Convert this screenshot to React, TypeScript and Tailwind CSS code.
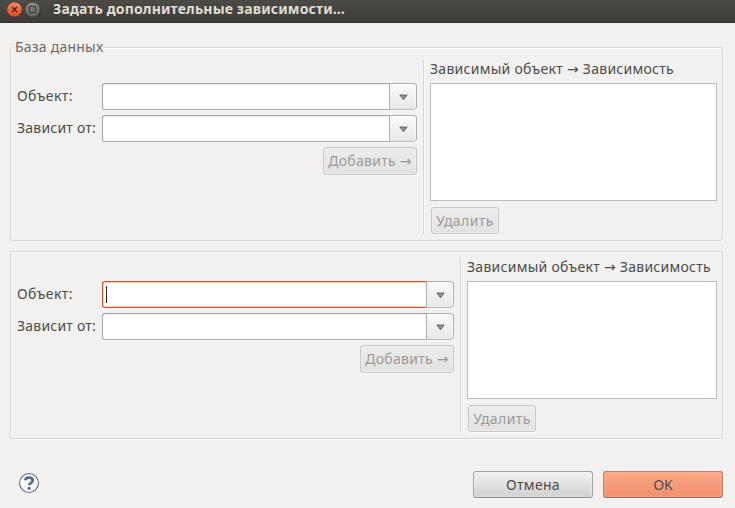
import type { ReactNode } from 'react';

function ComboBox({ focused = false }: { focused?: boolean }) {
  return (
    <div className="flex h-[27px] min-w-0 flex-1 rounded-[4px] shadow-[0_1px_0_#fafafa]">
      <div
        className={
          focused
            ? 'flex flex-1 items-center rounded-l-[3px] border border-r-0 border-[#ca5730] bg-white pl-[3px] shadow-[inset_0_1px_0_#fbd0bf,inset_0_-1px_0_#fbd0bf,inset_1px_0_0_#fbd0bf]'
            : 'flex flex-1 items-center rounded-l-[3px] border border-r-0 border-[#a9a7a4] bg-white pl-[3px] shadow-[inset_0_1px_0_#ecebea]'
        }
      >
        {focused && <span className="h-[17px] w-px bg-[#222]" />}
      </div>
      <button className="flex w-7 items-center justify-center rounded-r-[4px] border border-[#b0aeab] border-b-[#bdbbb8] bg-gradient-to-b from-[#fafafa] to-[#e9e8e7] shadow-[inset_0_1px_0_#fff,inset_-1px_0_0_#f8f8f8]">
        <svg width="9" height="7" viewBox="0 0 9 7" className="mt-[2px]">
          <path d="M.8 1H8.2L4.5 5.7Z" fill="#92918d" stroke="#686763" strokeWidth="1" />
        </svg>
      </button>
    </div>
  );
}

function Arrow() {
  return <span className="font-['DejaVu_Sans',sans-serif] leading-none">→</span>;
}

function DisabledButton({ className, children }: { className: string; children: ReactNode }) {
  return (
    <button
      disabled
      className={`${className} shrink-0 whitespace-nowrap rounded-[3px] border border-[#c8c6c4] bg-gradient-to-b from-[#edecec] to-[#e3e2e2] text-[#9c9a97] shadow-[0_1px_0_#fafafa,inset_0_0_0_1px_#efeeee]`}
    >
      {children}
    </button>
  );
}

function Fields({ focused = false }: { focused?: boolean }) {
  return (
    <div className="flex flex-1 flex-col gap-[5px] pt-[23px]">
      <div className="flex items-center">
        <label className="w-[85px] whitespace-nowrap pb-[2px] tracking-[0.4px]">Объект:</label>
        <ComboBox focused={focused} />
      </div>
      <div className="flex items-center">
        <label className="w-[85px] whitespace-nowrap pb-[2px] tracking-[0.22px]">Зависит от:</label>
        <ComboBox />
      </div>
      <DisabledButton className="h-7 w-[94px] self-end pb-[2px] tracking-[0.28px]">
        <span className="-mx-1">
          Добавить <Arrow />
        </span>
      </DisabledButton>
    </div>
  );
}

function Dependencies({ className }: { className: string }) {
  return (
    <div className={`${className} flex shrink-0 flex-col`}>
      <div className="h-[23px] whitespace-nowrap leading-[17px] tracking-[0.27px]">
        Зависимый объект <Arrow /> Зависимость
      </div>
      <div className="h-[118px] border border-[#bfbdb8] bg-white" />
      <DisabledButton className="mt-[6px] ml-px h-[27px] w-[68px] tracking-[0.4px]">
        <span className="-mx-1">Удалить</span>
      </DisabledButton>
    </div>
  );
}

function Separator() {
  return <div className="mx-[6px] w-px bg-[#d8d6d4] shadow-[1px_0_0_#fafafa]" />;
}

export default function App() {
  return (
    <div className="flex h-[508px] w-[735px] flex-col overflow-hidden bg-[#f2f1f0] font-['Noto_Sans','Open_Sans',sans-serif] text-[14px] leading-[19px] text-[#4c4c4c]">
      <header className="flex h-[23px] shrink-0 items-center border-b border-[#33322e] bg-gradient-to-b from-[#4b4a45] to-[#3d3c38] pl-[7px] text-[#dfdbd2]">
        <svg width="34" height="18" viewBox="0 0 34 18" className="mt-[-5px] shrink-0">
          <defs>
            <linearGradient id="close" x1="0" y1="0" x2="0" y2="1">
              <stop offset="0" stopColor="#f58863" />
              <stop offset="1" stopColor="#df4b1b" />
            </linearGradient>
            <linearGradient id="max" x1="0" y1="0" x2="0" y2="1">
              <stop offset="0" stopColor="#8b8a84" />
              <stop offset="1" stopColor="#63625c" />
            </linearGradient>
          </defs>
          <circle cx="7.5" cy="9.5" r="7.6" fill="url(#close)" stroke="#353430" strokeWidth=".6" />
          <path d="M5 7l5 5M10 7l-5 5" stroke="#45231a" strokeWidth="1.2" />
          <circle cx="25.5" cy="9.5" r="7.6" fill="url(#max)" stroke="#353430" strokeWidth=".6" />
          <rect x="22.5" y="6.5" width="6" height="6" fill="none" stroke="#3c3b37" />
        </svg>
        <h1 className="mt-[-6px] ml-3 whitespace-nowrap text-[14px] font-bold tracking-[0.15px]">Задать дополнительные зависимости…</h1>
      </header>
      <main className="flex flex-1 flex-col px-[10px] pr-3 pt-6">
        <section className="flex h-[194px] shrink-0 flex-col rounded-[3px] border border-[#d8d6d4] px-[6px] pr-[5px] shadow-[1px_1px_0_#fafafa,inset_1px_1px_0_#fafafa]">
          <div className="h-3">
            <h2 className="mt-[-11px] ml-[-3px] w-[90px] whitespace-nowrap bg-[#f2f1f0] px-px tracking-[0.22px] text-[#6a6867]">База данных</h2>
          </div>
          <div className="flex h-[174px]">
            <Fields />
            <Separator />
            <Dependencies className="w-[287px]" />
          </div>
        </section>
        <section className="mt-[10px] flex h-[188px] shrink-0 border border-[#d8d6d4] py-[6px] pr-[5px] pl-[6px] shadow-[1px_1px_0_#fafafa,inset_1px_1px_0_#fafafa]">
          <Fields focused />
          <Separator />
          <Dependencies className="w-[250px]" />
        </section>
        <footer className="mt-8 flex h-[27px] items-center gap-[10px]">
          <button className="ml-2 mt-[-4px]" aria-label="Справка">
            <svg width="22" height="22" viewBox="0 0 22 22">
              <circle cx="11" cy="11" r="9.5" fill="#f7f7f8" stroke="#5d6e8c" strokeWidth="1.1" />
              <path d="M7.4 8.3C7.4 4.6 14.8 4.6 14.8 8.3C14.8 10.8 11.3 10.9 11.3 13.3" fill="none" stroke="#556a90" strokeWidth="2.7" />
              <circle cx="11.2" cy="16.3" r="1.6" fill="#556a90" />
            </svg>
          </button>
          <button className="ml-auto h-[27px] w-[120px] rounded-[3px] border border-[#a5a4a2] border-b-[#8e8d8b] bg-gradient-to-b from-[#f2f2f2] to-[#d0d0d0] tracking-[0.3px] shadow-[0_1px_0_#fafafa,inset_0_0_3px_#f4f4f4]">
            Отмена
          </button>
          <button className="h-[27px] w-[120px] rounded-[3px] border border-[#b67f6b] border-b-[#8d6b60] bg-gradient-to-b from-[#fbaa8b] to-[#f08e69] shadow-[0_1px_0_#fafafa,inset_0_0_3px_#fbb298]">
            OK
          </button>
        </footer>
      </main>
    </div>
  );
}
